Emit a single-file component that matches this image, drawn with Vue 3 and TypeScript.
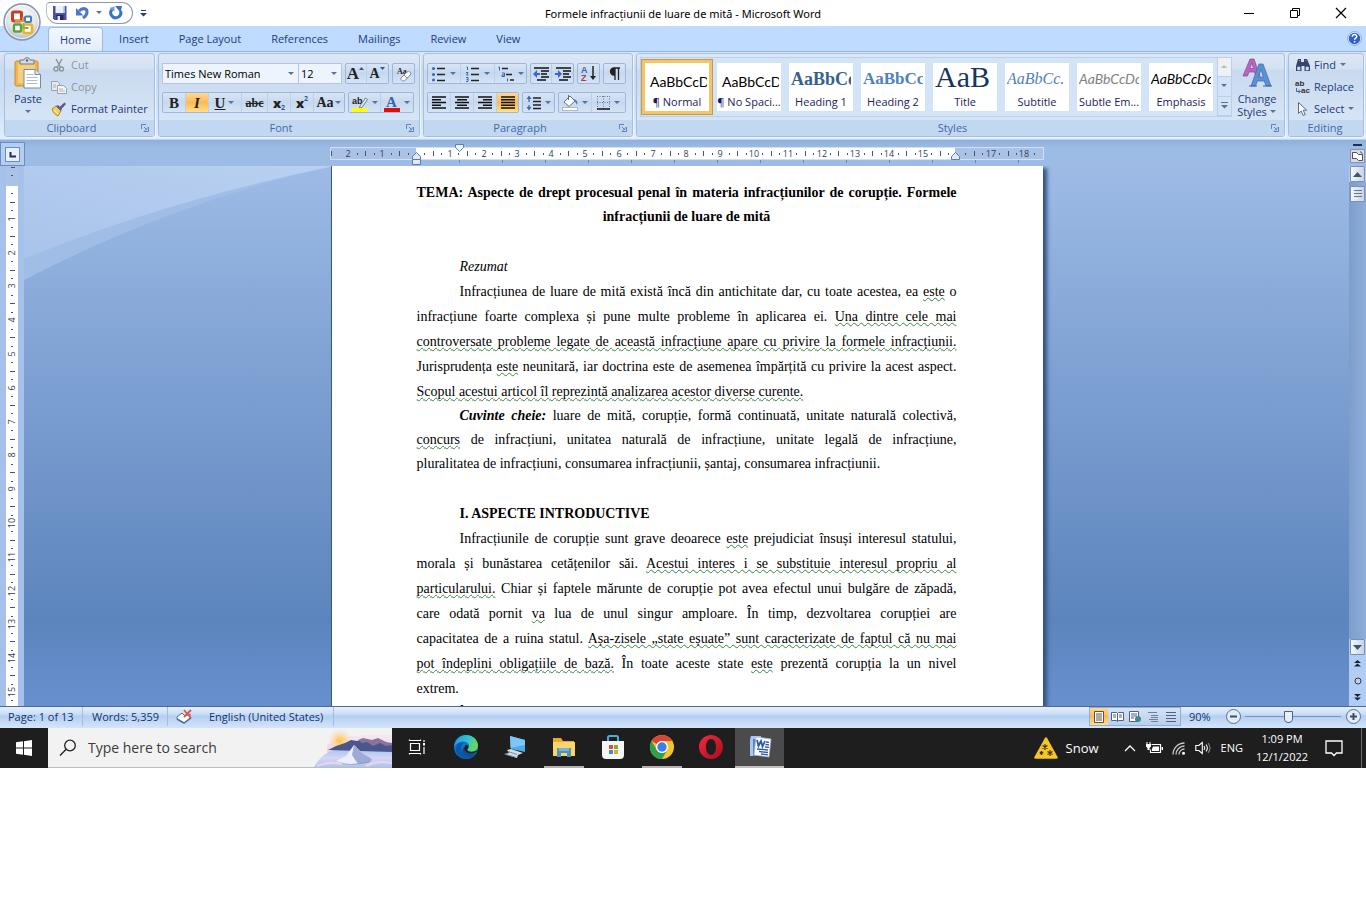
<script setup lang="ts">
import { ref } from 'vue'

interface Seg { t: string; wavy?: boolean; b?: boolean; i?: boolean }
interface Line { segs: Seg[]; indent?: boolean; ragged?: boolean }

const tabs = ['Home', 'Insert', 'Page Layout', 'References', 'Mailings', 'Review', 'View']
const fontName = ref('Times New Roman')
const fontSize = ref('12')
const zoom = ref(90)
const query = ref('')

const styles = [
  { name: '¶ Normal', sample: 'AaBbCcDc', kind: 'body' },
  { name: '¶ No Spaci...', sample: 'AaBbCcDc', kind: 'body' },
  { name: 'Heading 1', sample: 'AaBbCc', kind: 'h1' },
  { name: 'Heading 2', sample: 'AaBbCc', kind: 'h2' },
  { name: 'Title', sample: 'AaB', kind: 'title' },
  { name: 'Subtitle', sample: 'AaBbCc.', kind: 'subtitle' },
  { name: 'Subtle Em...', sample: 'AaBbCcDc', kind: 'subtle' },
  { name: 'Emphasis', sample: 'AaBbCcDc', kind: 'emphasis' },
]

const abstractLines: Line[] = [
  { indent: true, segs: [{ t: 'Infracțiunea de luare de mită există încă din antichitate dar, cu toate acestea, ea ' }, { t: 'este', wavy: true }, { t: ' o' }] },
  { segs: [{ t: 'infracțiune foarte complexa și pune multe probleme în aplicarea ei. ' }, { t: 'Una dintre cele mai', wavy: true }] },
  { segs: [{ t: 'controversate probleme legate de această infracțiune apare cu privire la formele infracțiunii.', wavy: true }] },
  { segs: [{ t: 'Jurisprudența ' }, { t: 'este', wavy: true }, { t: ' neunitară, iar doctrina este de asemenea împărțită cu privire la acest aspect.' }] },
  { ragged: true, segs: [{ t: 'Scopul acestui articol îl reprezintă analizarea acestor diverse curente.', wavy: true }] },
]
const keywordLines: Line[] = [
  { indent: true, segs: [{ t: 'Cuvinte cheie:', b: true, i: true }, { t: ' luare de mită, corupție, formă continuată, unitate naturală colectivă,' }] },
  { segs: [{ t: 'concurs', wavy: true }, { t: ' de infracțiuni, unitatea naturală de infracțiune, unitate legală de infracțiune,' }] },
  { ragged: true, segs: [{ t: 'pluralitatea de infracțiuni, consumarea infracțiunii, șantaj, consumarea infracțiunii.' }] },
]
const introLines: Line[] = [
  { indent: true, segs: [{ t: 'Infracțiunile de corupție sunt grave deoarece ' }, { t: 'este', wavy: true }, { t: ' prejudiciat însuși interesul statului,' }] },
  { segs: [{ t: 'morala și bunăstarea cetățenilor săi. ' }, { t: 'Acestui interes i se substituie interesul propriu al', wavy: true }] },
  { segs: [{ t: 'particularului.', wavy: true }, { t: ' Chiar și faptele mărunte de corupție pot avea efectul unui bulgăre de zăpadă,' }] },
  { segs: [{ t: 'care odată pornit ' }, { t: 'va', wavy: true }, { t: ' lua de unul singur amploare. În timp, dezvoltarea corupției are' }] },
  { segs: [{ t: 'capacitatea de a ruina statul. ' }, { t: 'Așa-zisele „state eșuate” sunt caracterizate de faptul că nu mai', wavy: true }] },
  { segs: [{ t: 'pot îndeplini obligațiile de bază.', wavy: true }, { t: ' În toate aceste state ' }, { t: 'este', wavy: true }, { t: ' prezentă corupția la un nivel' }] },
  { ragged: true, segs: [{ t: 'extrem.' }] },
  { indent: true, ragged: true, segs: [{ t: 'Î' }] },
]
const blocks = [
  { kind: 'abstract', lines: abstractLines },
  { kind: 'keywords', lines: keywordLines },
]

const CM = 33.8
const hZero = 86
const vZero = 19
const range = (a: number, b: number) => Array.from({ length: b - a + 1 }, (_, k) => a + k)
const hUnits = range(-2, 18)
const vUnits = range(0, 15)
const at = (zero: number, n: number) => Math.round(zero + n * CM)
</script>

<template>
  <div class="desktop">
    <header class="titlebar">
      <button class="orb" aria-label="Office Button">
        <svg width="40" height="40" viewBox="0 0 40 40">
          <defs>
            <radialGradient id="orb" cx=".5" cy=".35" r=".7">
              <stop offset="0" stop-color="#fff" /><stop offset=".6" stop-color="#dfe4ec" /><stop offset="1" stop-color="#a3adbd" />
            </radialGradient>
          </defs>
          <circle cx="20" cy="20" r="18" fill="url(#orb)" stroke="#8793a8" stroke-width="1.5" />
          <circle cx="20" cy="20" r="16.5" fill="none" stroke="#fff" opacity=".8" />
          <rect x="10.5" y="10" width="9" height="9" rx="1.5" fill="#fff" stroke="#c9401c" stroke-width="3" />
          <path d="M13 19h8v-4" fill="none" stroke="#f08a3c" stroke-width="2" />
          <rect x="23" y="14.5" width="6" height="5.500" rx="1" fill="#fff" stroke="#3c7fc9" stroke-width="2" />
          <rect x="12" y="22.500" width="7" height="7" rx="1" fill="#fff" stroke="#5aa23c" stroke-width="2.4" />
          <rect x="21.5" y="22.500" width="8.500" height="8.500" rx="1.5" fill="#fff" stroke="#f0b21c" stroke-width="2.6" />
          <path d="M21.500 21v5h5" fill="none" stroke="#8cb43c" stroke-width="1.800" />
        </svg>
      </button>
      <div class="qat">
        <button aria-label="Save">
          <svg width="16" height="16" viewBox="0 0 16 16"><path d="M1 1h13.500v14H2.500L1 13.500z" fill="#4e50a8" /><rect x="3.500" y="1" width="9" height="7" fill="#eaf1fb" /><path d="M11 1h1.500v7H11z" fill="#b9cdea" /><rect x="4.500" y="10" width="7" height="5" fill="#23265e" /><rect x="5.500" y="11" width="2.500" height="4" fill="#dfe4f4" /></svg>
        </button>
        <button aria-label="Undo">
          <svg width="16" height="16" viewBox="0 0 16 16"><path d="M4 6C8 2 12.500 3.500 12 7.500c-.3 2.500-1.800 4-4 5.500" fill="none" stroke="#4a78c6" stroke-width="3" /><path d="M1 3v7.500h7.500z" fill="#4a78c6" /></svg>
        </button>
        <svg class="caret" width="7" height="4" viewBox="0 0 7 4"><path d="M0 0h6L3 3z" fill="#5b7398" /></svg>
        <button aria-label="Repeat">
          <svg width="16" height="16" viewBox="0 0 16 16"><path d="M4 4.500A5 5 0 1 0 12.500 6" fill="none" stroke="#3b70c8" stroke-width="3" /><path d="M7 1h7l-1.500 6.500z" fill="#3b70c8" /><path d="M1.500 3l5-1.500v5z" fill="#6d9be0" /></svg>
        </button>
      </div>
      <button class="qatmore" aria-label="Customize Quick Access Toolbar">
        <svg width="7" height="7" viewBox="0 0 7 7"><path d="M1 0h5v1H1zM0 3h7L3.500 6.500z" fill="#2c3f66" /></svg>
      </button>
      <h1>Formele infracțiunii de luare de mită - Microsoft Word</h1>
      <div class="winbtns">
        <button aria-label="Minimize"><svg width="12" height="12" viewBox="0 0 12 12"><path d="M1 6.500h10" stroke="#000" /></svg></button>
        <button aria-label="Restore"><svg width="12" height="12" viewBox="0 0 12 12"><path d="M1.500 3.500h7v7h-7zM3.500 3.500v-2h7v7h-2" fill="none" stroke="#000" /></svg></button>
        <button aria-label="Close"><svg width="12" height="12" viewBox="0 0 12 12"><path d="M1 1l10 10M11 1L1 11" stroke="#000" stroke-width="1.2" /></svg></button>
      </div>
    </header>

    <nav class="tabs">
      <button v-for="(t, k) in tabs" :key="t" :class="{ on: k === 0 }">{{ t }}</button>
      <button class="help" aria-label="Help">
        <svg width="15" height="15" viewBox="0 0 15 15"><circle cx="7.500" cy="7.500" r="6.500" fill="#2f62c4" stroke="#dce9fb" stroke-width="1.500" /><circle cx="7.500" cy="7.500" r="7" fill="none" stroke="#6f94cf" stroke-width=".7" /><path d="M5.300 5.800c0-3 4.500-2.800 4.500-.3 0 1.500-2.200 1.600-2.200 3.200M7.600 10v1.600" fill="none" stroke="#fff" stroke-width="1.500" /></svg>
      </button>
    </nav>

    <section class="ribbon">
      <div class="group clipboard">
        <div class="body">
          <button class="big paste">
            <svg width="28" height="32" viewBox="0 0 28 32"><rect x="1" y="4" width="23" height="25" rx="1.500" fill="#efb84f" stroke="#c98e2c" /><rect x="4" y="6" width="17" height="20" fill="#f6cf7c" /><path d="M6 3h4c0-3 6-3 6 0h4v4H6z" fill="#d7dbe2" stroke="#71798a" /><circle cx="13" cy="3.500" r="1.200" fill="#596272" /><path d="M10 12.500h11l5.500 5V31H10z" fill="#fff" stroke="#7088b4" /><path d="M21 12.500v5h5.500" fill="#dbe6f6" stroke="#7088b4" /><path d="M12.500 17.500h7m-7 3h11m-11 3h11m-11 3h11" stroke="#a9bedf" /></svg>
            <span>Paste</span>
            <svg class="caret" width="7" height="4" viewBox="0 0 7 4"><path d="M0 0h6L3 3z" fill="#5b7398" /></svg>
          </button>
          <div class="stack">
            <button class="off">
              <svg width="16" height="16" viewBox="0 0 16 16"><path d="M5 2l4.500 8M11 2L6.500 10" stroke="#8e959e" stroke-width="1.500" fill="none" /><circle cx="5" cy="12" r="2" fill="none" stroke="#8e959e" stroke-width="1.400" /><circle cx="10.500" cy="12" r="2" fill="none" stroke="#8e959e" stroke-width="1.400" /></svg>Cut
            </button>
            <button class="off">
              <svg width="16" height="16" viewBox="0 0 16 16"><path d="M.5 2.500h6l2 2v7h-8z" fill="#e8eaee" stroke="#9aa1ab" /><path d="M6.500 6.500h6l3 3v5h-9z" fill="#f4f5f7" stroke="#9aa1ab" /><path d="M8 10h4m-4 2h6M2 6h3M2 8h3" stroke="#a9b0ba" /></svg>Copy
            </button>
            <button>
              <svg width="16" height="16" viewBox="0 0 16 16"><path d="M1 8l4-3 5 5-3 5c-3-1-5-4-6-7z" fill="#f5cf5b" stroke="#b78a24" /><path d="M5 5l2-1 4 4-1 2z" fill="#4c5fae" /><path d="M8.500 6l5-4.500L15 3l-4.500 5z" fill="#6b4d8f" /><path d="M3 9l4 4" stroke="#fff3b8" /></svg>Format Painter
            </button>
          </div>
        </div>
        <footer><span>Clipboard</span><button class="launch" aria-label="Clipboard options"><svg width="8" height="8" viewBox="0 0 8 8"><path d="M.5 5V.5H5M3 3l3 3M7.500 3v4.500H3z" fill="none" stroke="#5f83b7" /></svg></button></footer>
      </div>

      <div class="group font">
        <div class="body rows">
          <div class="row">
            <div class="combos">
              <label class="combo wide"><select v-model="fontName" aria-label="Font"><option>Times New Roman</option><option>Calibri</option></select><svg width="7" height="4" viewBox="0 0 7 4"><path d="M0 0h6L3 3z" fill="#5b7398" /></svg></label>
              <label class="combo narrow"><select v-model="fontSize" aria-label="Font size"><option>12</option><option>14</option></select><svg width="7" height="4" viewBox="0 0 7 4"><path d="M0 0h6L3 3z" fill="#5b7398" /></svg></label>
            </div>
            <div class="cluster">
              <button class="c22 serif bigger" aria-label="Grow Font">A<svg width="6" height="4" viewBox="0 0 6 4"><path d="M0 3h5L2.500 0z" fill="#2c559b" /></svg></button>
              <button class="c22 serif smaller" aria-label="Shrink Font">A<svg width="6" height="4" viewBox="0 0 6 4"><path d="M0 0h5L2.500 3z" fill="#2c559b" /></svg></button>
            </div>
            <div class="cluster">
              <button class="c22" aria-label="Clear Formatting"><svg width="18" height="18" viewBox="0 0 18 18"><text x="2" y="9" class="tiny">Aa</text><path d="M6 13l6-6c2-1 4 0 4 2l-6 6.500c-2 1-5 0-4-2.500z" fill="#fff" stroke="#7d8aa2" /><path d="M9 10l3.500 3.500" stroke="#7d8aa2" /></svg></button>
            </div>
          </div>
          <div class="row">
            <div class="cluster">
              <button class="c23 serif" aria-label="Bold"><b>B</b></button>
              <button class="c23 serif lit" aria-label="Italic"><b><i>I</i></b></button>
              <button class="c35 serif" aria-label="Underline"><b><u>U</u></b><svg class="caret" width="7" height="4" viewBox="0 0 7 4"><path d="M0 0h6L3 3z" fill="#5b7398" /></svg></button>
              <button class="c25 serif strike" aria-label="Strikethrough"><s>abc</s></button>
              <button class="c23 sans" aria-label="Subscript"><b>x</b><sub>2</sub></button>
              <button class="c23 sans" aria-label="Superscript"><b>x</b><sup>2</sup></button>
              <button class="c30 serif case" aria-label="Change Case"><b>Aa</b><svg class="caret" width="7" height="4" viewBox="0 0 7 4"><path d="M0 0h6L3 3z" fill="#5b7398" /></svg></button>
            </div>
            <div class="cluster">
              <button class="c32" aria-label="Text Highlight Color"><svg width="18" height="18" viewBox="0 0 18 18"><text x="1" y="10" class="ab">ab</text><path d="M9 12l5.500-8 2 1.500-5.500 8-2.500.5z" fill="#e4e8f0" stroke="#5b6780" stroke-width=".8" /><rect x="1" y="14" width="15" height="4" fill="#ff0" /></svg><svg class="caret" width="7" height="4" viewBox="0 0 7 4"><path d="M0 0h6L3 3z" fill="#5b7398" /></svg></button>
              <button class="c32" aria-label="Font Color"><svg width="18" height="18" viewBox="0 0 18 18"><text x="3" y="13" class="fontcolor">A</text><rect x="1" y="14" width="16" height="4" fill="#e00d0d" /></svg><svg class="caret" width="7" height="4" viewBox="0 0 7 4"><path d="M0 0h6L3 3z" fill="#5b7398" /></svg></button>
            </div>
          </div>
        </div>
        <footer><span>Font</span><button class="launch" aria-label="Font options"><svg width="8" height="8" viewBox="0 0 8 8"><path d="M.5 5V.5H5M3 3l3 3M7.500 3v4.500H3z" fill="none" stroke="#5f83b7" /></svg></button></footer>
      </div>

      <div class="group paragraph">
        <div class="body rows">
          <div class="row">
            <div class="cluster">
              <button class="c32" aria-label="Bullets"><svg width="16" height="16" viewBox="0 0 16 16"><path d="M6 2.500h8M6 8.500h8M6 14.500h8" stroke="#222" stroke-width="1.300" /><circle cx="2.500" cy="2.500" r="1.500" fill="#3c66ae" /><circle cx="2.500" cy="8.500" r="1.500" fill="#3c66ae" /><circle cx="2.500" cy="14" r="1.500" fill="#3c66ae" /></svg><svg class="caret" width="7" height="4" viewBox="0 0 7 4"><path d="M0 0h6L3 3z" fill="#5b7398" /></svg></button>
              <button class="c35" aria-label="Numbering"><svg width="16" height="16" viewBox="0 0 16 16"><path d="M6 2.500h8M6 8.500h8M6 14.500h8" stroke="#222" stroke-width="1.300" /><path d="M1.500 1h1v3M1 6.500h2L1.500 9h2M1 11.500h2v4H1M1.500 13.500H3" fill="none" stroke="#3c66ae" /></svg><svg class="caret" width="7" height="4" viewBox="0 0 7 4"><path d="M0 0h6L3 3z" fill="#5b7398" /></svg></button>
              <button class="c30" aria-label="Multilevel List"><svg width="18" height="16" viewBox="0 0 18 16"><path d="M5 2.500h6M9 8.500h6M13 14h4" stroke="#222" stroke-width="1.300" /><path d="M1.500 1h1v3.500M5 7h2.500v3.500H5V9h2M10.500 12.500v3" fill="none" stroke="#3c66ae" /></svg><svg class="caret" width="7" height="4" viewBox="0 0 7 4"><path d="M0 0h6L3 3z" fill="#5b7398" /></svg></button>
            </div>
            <div class="cluster">
              <button class="c22" aria-label="Decrease Indent"><svg width="16" height="14" viewBox="0 0 16 14"><path d="M1 1h15M8 4h8M8 7h6M8 10h8M4 13h9" stroke="#111" stroke-width="1.500" /><path d="M0 7l4-4v3h3v2H4v3z" fill="#3c66c4" /></svg></button>
              <button class="c22" aria-label="Increase Indent"><svg width="16" height="14" viewBox="0 0 16 14"><path d="M1 1h15M8 4h8M8 7h6M8 10h8M4 13h9" stroke="#111" stroke-width="1.500" /><path d="M7 7L3 3v3H0v2h3v3z" fill="#3c66c4" /></svg></button>
            </div>
            <div class="cluster">
              <button class="c22" aria-label="Sort"><svg width="18" height="19" viewBox="0 0 18 19"><text x="1" y="9" class="az blue">A</text><text x="1" y="17" class="az red">Z</text><path d="M13 2v12" stroke="#222" stroke-width="1.500" /><path d="M10 12h6l-3 4z" fill="#222" /></svg></button>
            </div>
            <div class="cluster">
              <button class="c22" aria-label="Show/Hide"><svg width="12" height="14" viewBox="0 0 12 14"><path d="M11 1H5a3.500 3.500 0 0 0 0 7h1V1M6 8v5M9.500 1v12" fill="none" stroke="#222" stroke-width="1.300" /><path d="M6 1H5a3.500 3.500 0 0 0 0 7h1z" fill="#222" /></svg></button>
            </div>
          </div>
          <div class="row">
            <div class="cluster">
              <button class="c23" aria-label="Align Left"><svg width="16" height="13" viewBox="0 0 16 13"><path d="M1 1h14M1 3.700h9M1 6.500h14M1 9.300h9M1 12h14" stroke="#111" stroke-width="1.400" /></svg></button>
              <button class="c23" aria-label="Center"><svg width="16" height="13" viewBox="0 0 16 13"><path d="M1 1h14M3 3.700h10M1 6.500h14M3 9.300h10M1 12h14" stroke="#111" stroke-width="1.400" /></svg></button>
              <button class="c23" aria-label="Align Right"><svg width="16" height="13" viewBox="0 0 16 13"><path d="M1 1h14M6 3.700h9M1 6.500h14M6 9.300h9M1 12h14" stroke="#111" stroke-width="1.400" /></svg></button>
              <button class="c22 lit" aria-label="Justify"><svg width="16" height="13" viewBox="0 0 16 13"><path d="M1 1h14M1 3.700h14M1 6.500h14M1 9.300h14M1 12h14" stroke="#111" stroke-width="1.400" /></svg></button>
            </div>
            <div class="cluster">
              <button class="c30" aria-label="Line Spacing"><svg width="16" height="16" viewBox="0 0 16 16"><path d="M7 3h8M7 6.500h8M7 10h8M7 13.500h8" stroke="#222" stroke-width="1.300" /><path d="M3 3v11" stroke="#3c66ae" stroke-width="1.300" stroke-dasharray="4 3" /><path d="M.5 4L3 .5 5.500 4zM.5 12L3 15.500 5.500 12z" fill="#3c66ae" /></svg><svg class="caret" width="7" height="4" viewBox="0 0 7 4"><path d="M0 0h6L3 3z" fill="#5b7398" /></svg></button>
            </div>
            <div class="cluster">
              <button class="c32" aria-label="Shading"><svg width="17" height="17" viewBox="0 0 17 17"><path d="M2 8l6-6 5 5-6 5.500z" fill="#fff" stroke="#5e6f8e" /><path d="M6.500 1v5" stroke="#5e6f8e" /><path d="M12 5c3 1 4 3 3 6-1-2-1-3-3-4z" fill="#4a76c0" /><rect x=".5" y="13.500" width="15" height="3" fill="#fff" stroke="#a9b6cb" /></svg><svg class="caret" width="7" height="4" viewBox="0 0 7 4"><path d="M0 0h6L3 3z" fill="#5b7398" /></svg></button>
              <button class="c32" aria-label="Borders"><svg width="14" height="14" viewBox="0 0 14 14"><path d="M.5 0v13M6.500 0v13M12.500 0v13M0 .5h13M0 6.500h13" stroke="#6a7890" stroke-dasharray="1 1.500" /><path d="M0 13h13" stroke="#111" stroke-width="1.500" /></svg><svg class="caret" width="7" height="4" viewBox="0 0 7 4"><path d="M0 0h6L3 3z" fill="#5b7398" /></svg></button>
            </div>
          </div>
        </div>
        <footer><span>Paragraph</span><button class="launch" aria-label="Paragraph options"><svg width="8" height="8" viewBox="0 0 8 8"><path d="M.5 5V.5H5M3 3l3 3M7.500 3v4.500H3z" fill="none" stroke="#5f83b7" /></svg></button></footer>
      </div>

      <div class="group styles">
        <div class="body">
          <div class="gallery">
            <button v-for="(s, k) in styles" :key="s.name" class="card" :class="{ chosen: k === 0 }">
              <span class="sample" :class="s.kind">{{ s.sample }}</span>
              <span class="name">{{ s.name }}</span>
            </button>
            <div class="scroller">
              <button aria-label="Previous row" class="dim"><svg width="7" height="4" viewBox="0 0 7 4"><path d="M0 3h6L3 0z" fill="#b9b9bd" /></svg></button>
              <button aria-label="Next row"><svg width="7" height="4" viewBox="0 0 7 4"><path d="M0 0h6L3 3z" fill="#5b7398" /></svg></button>
              <button aria-label="More styles"><svg width="7" height="7" viewBox="0 0 7 7"><path d="M0 0h7v1H0zM0 3h7L3.500 6.500z" fill="#5b7398" /></svg></button>
            </div>
          </div>
          <button class="big change">
            <svg width="30" height="30" viewBox="0 0 30 30"><path d="M1 18L8 1h4l6 17h-4l-1.500-4H7l-1.500 4zM8 10.500h3.500L9.700 5z" fill="#b765bd" stroke="#8d469c" stroke-width=".7" /><path d="M9 28L17 6h4l8 22h-5l-1.700-5h-7L13.500 28zM16.500 19h4.800L19 11.500z" fill="#5d8fd3" stroke="#3a67a8" stroke-width=".7" /><path d="M7 28h8M21 28h9" stroke="#3a67a8" /></svg>
            <span>Change</span>
            <span>Styles <svg width="7" height="4" viewBox="0 0 7 4"><path d="M0 0h6L3 3z" fill="#5b7398" /></svg></span>
          </button>
        </div>
        <footer><span>Styles</span><button class="launch" aria-label="Styles options"><svg width="8" height="8" viewBox="0 0 8 8"><path d="M.5 5V.5H5M3 3l3 3M7.500 3v4.500H3z" fill="none" stroke="#5f83b7" /></svg></button></footer>
      </div>

      <div class="group editing">
        <div class="body">
          <div class="stack">
            <button>
              <svg width="16" height="16" viewBox="0 0 16 16"><path d="M3 2h3v3h3V2h3l3 7v5h-5.500V9h-3v5H1V9z" fill="#34466e" /><path d="M2.500 10h2.500v3H2.500zM11 10h2.500v3H11zM4 3.500h1M10.500 3.500h1" fill="#c9d8f1" stroke="#c9d8f1" stroke-width=".6" /></svg>Find<svg class="caret" width="7" height="4" viewBox="0 0 7 4"><path d="M0 0h6L3 3z" fill="#5b7398" /></svg>
            </button>
            <button>
              <svg width="16" height="16" viewBox="0 0 16 16"><text x="0" y="7" class="rep">ab</text><text x="6" y="14" class="rep">ac</text><path d="M1.500 9v3.500H5M3.500 11l2 1.500-2 1.500" fill="none" stroke="#3c66ae" /></svg>Replace
            </button>
            <button>
              <svg width="16" height="16" viewBox="0 0 16 16"><path d="M3.500 1.500v11l2.700-2.500 2 4.500 2-1-2-4.300h3.500z" fill="#fff" stroke="#5b6780" /></svg>Select<svg class="caret" width="7" height="4" viewBox="0 0 7 4"><path d="M0 0h6L3 3z" fill="#5b7398" /></svg>
            </button>
          </div>
        </div>
        <footer><span>Editing</span></footer>
      </div>
    </section>

    <div class="rulerbar">
      <button class="tabstop" aria-label="Left tab"><svg width="15" height="15" viewBox="0 0 15 15"><rect x=".5" y=".5" width="14" height="14" fill="#e6effb" stroke="#6a8cc4" /><path d="M5.500 5v4.500H11" fill="none" stroke="#1d2f52" stroke-width="2" /></svg></button>
      <div class="rulerwrap">
        <svg width="714" height="26" viewBox="0 0 714 26">
          <rect x="0" y="7" width="714" height="13" fill="#c3d7f2" />
          <rect x="0" y="7" width="87" height="13" fill="#a9c2e6" />
          <rect x="624" y="7" width="90" height="13" fill="#a9c2e6" />
          <rect x="86" y="7" width="539" height="13" fill="#fff" />
          <path d="M.5 7.500h713v12H.5z" fill="none" stroke="#cfe0f7" />
          <template v-for="n in hUnits" :key="n">
            <text v-if="n !== 0 && n !== 16" :x="at(hZero, n)" y="17" class="num">{{ Math.abs(n) }}</text>
            <path v-if="n < 18" :d="`M${at(hZero, n + .5)}.5 11v5M${at(hZero, n + .25)}.5 13v2M${at(hZero, n + .75)}.5 13v2`" stroke="#45536b" />
          </template>
          <path d="M704.500 13v2M1.500 11v5" stroke="#45536b" />
          <path v-for="k in range(1, 15)" :key="'t' + k" :d="`M${hZero + k * 43}.5 20v3`" stroke="#6c85ad" />
          <path d="M125.500 4.500h8v3l-4 4-4-4z" fill="#eef4fc" stroke="#5f7dab" />
          <path d="M82.500 19.500v-3l4-4 4 4v3zM82.500 19.500h8v5h-8z" fill="#dfe9f8" stroke="#5f7dab" />
          <path d="M621.500 19.500v-3l4-4 4 4v3z" fill="#dfe9f8" stroke="#5f7dab" />
        </svg>
      </div>
      <div class="rulerend">
        <i class="split"></i>
        <button aria-label="View Ruler"><svg width="15" height="14" viewBox="0 0 15 14"><rect x=".5" y=".5" width="14" height="13" fill="#d5dae6" stroke="#8b93a8" /><path d="M2.500 3.500h4l2 2h4v6h-4l-2-2h-4zM10 2.500l2.500 2" fill="#fff" stroke="#4a4f5e" /></svg></button>
      </div>
    </div>

    <main class="workspace">
      <div class="vruler">
        <svg width="12" height="540" viewBox="0 0 12 540">
          <rect width="12" height="540" fill="#fff" />
          <rect width="12" height="20" fill="#a9c2e6" />
          <template v-for="n in vUnits" :key="n">
            <text v-if="n > 0" :x="-at(vZero, n)" y="9" transform="rotate(-90)" class="num">{{ n }}</text>
            <path :d="`M4 ${at(vZero, n + .5)}.5h5M5 ${at(vZero, n + .25)}.5h2M5 ${at(vZero, n + .75)}.5h2`" stroke="#45536b" />
          </template>
          <path d="M5 1.500h4M5 9.500h2" stroke="#45536b" />
        </svg>
      </div>
      <div class="canvas">
        <svg class="swoosh" width="310" height="120" viewBox="0 0 310 120">
          <defs><linearGradient id="sw" x1="0" y1="1" x2="1" y2="0"><stop offset="0" stop-color="#a9c4e9" /><stop offset="1" stop-color="#b9d0f1" /></linearGradient></defs>
          <path d="M0 0H310Q150 36 0 114z" fill="#a0bde6" />
          <path d="M0 0H310Q140 35 0 93z" fill="url(#sw)" />
        </svg>
        <article class="page">
          <h2>
            <span class="line just">TEMA: Aspecte de drept procesual penal în materia infracțiunilor de corupție. Formele</span>
            <span class="line">infracțiunii de luare de mită</span>
          </h2>
          <p class="indent"><i>Rezumat</i></p>
          <p v-for="b in blocks" :key="b.kind" :class="b.kind">
            <span v-for="(l, k) in b.lines" :key="k" class="line" :class="{ just: !l.ragged, indent: l.indent }"><span v-for="(s, j) in l.segs" :key="j" :class="{ wavy: s.wavy, bold: s.b, ital: s.i }">{{ s.t }}</span></span>
          </p>
          <h3 class="indent">I. ASPECTE INTRODUCTIVE</h3>
          <p>
            <span v-for="(l, k) in introLines" :key="k" class="line" :class="{ just: !l.ragged, indent: l.indent }"><span v-for="(s, j) in l.segs" :key="j" :class="{ wavy: s.wavy }">{{ s.t }}</span></span>
          </p>
        </article>
      </div>
      <div class="vscroll">
        <button class="knob" aria-label="Scroll up"><svg width="9" height="5" viewBox="0 0 9 5"><path d="M0 5h9L4.500 0z" fill="#44546f" /></svg></button>
        <div class="track"><button class="knob thumb" aria-label="Scroll position"><svg width="8" height="10" viewBox="0 0 8 10"><path d="M0 1.500h8M0 4.500h8M0 7.500h8" stroke="#6b7689" /></svg></button></div>
        <button class="knob" aria-label="Scroll down"><svg width="9" height="5" viewBox="0 0 9 5"><path d="M0 0h9L4.500 5z" fill="#44546f" /></svg></button>
        <button class="jump" aria-label="Previous Page"><svg width="7" height="7" viewBox="0 0 7 7"><path d="M0 3h7L3.500 0zM0 6.500h7l-3.500-3z" fill="#16213a" /></svg></button>
        <button class="jump" aria-label="Select Browse Object"><svg width="8" height="8" viewBox="0 0 8 8"><circle cx="4" cy="4" r="3" fill="#c9ced8" stroke="#333b4c" /></svg></button>
        <button class="jump" aria-label="Next Page"><svg width="7" height="7" viewBox="0 0 7 7"><path d="M0 0h7L3.500 3zM0 3.500h7l-3.500 3z" fill="#16213a" /></svg></button>
      </div>
    </main>

    <footer class="status">
      <span class="cell c1">Page: 1 of 13</span>
      <span class="cell c2">Words: 5,359</span>
      <span class="cell c3"><svg width="17" height="15" viewBox="0 0 17 15"><path d="M1 8l5-4 3 3 5-2v4l-6 5-7-4z" fill="#fff" stroke="#4c6fb5" /><path d="M1 10l7 4 7-5" fill="none" stroke="#4c6fb5" stroke-width="1.500" /><path d="M8 1l7 8M15 1L8 8" stroke="#e0583c" stroke-width="1.800" /></svg></span>
      <span class="cell c4">English (United States)</span>
      <span class="spring"></span>
      <div class="views">
        <button class="lit" aria-label="Print Layout"><svg width="12" height="12" viewBox="0 0 12 12"><path d="M1.500.5h9v11h-9z" fill="#fff" stroke="#5c5540" /><path d="M3 3h6M3 5h6M3 7h6M3 9h6" stroke="#5c5540" /></svg></button>
        <button aria-label="Full Screen Reading"><svg width="13" height="12" viewBox="0 0 13 12"><path d="M.5 1.500h5l1 1 1-1h5v8h-5l-1 1-1-1h-5z" fill="#fff" stroke="#4f6185" /><path d="M6.500 2v9M2 4h3M2 6h3M8 4h3M8 6h3" stroke="#4f6185" /></svg></button>
        <button aria-label="Web Layout"><svg width="13" height="12" viewBox="0 0 13 12"><path d="M.5.500h9v10h-9z" fill="#fff" stroke="#4f6185" /><path d="M2 3h6M2 5h6M2 7h3" stroke="#4f6185" /><circle cx="9" cy="8" r="3" fill="#3e8a8c" /></svg></button>
        <button aria-label="Outline"><svg width="12" height="12" viewBox="0 0 12 12"><path d="M1 1.500h9M4 4.500h7M4 6.500h7M2 8.500h9M4 10.500h7" stroke="#6f819f" /></svg></button>
        <button aria-label="Draft"><svg width="12" height="12" viewBox="0 0 12 12"><path d="M1 1.500h10M1 4.500h10M1 7.500h10M1 10.500h10" stroke="#4f6185" /></svg></button>
      </div>
      <button class="pct">{{ zoom }}%</button>
      <button class="round" aria-label="Zoom Out"><svg width="17" height="17" viewBox="0 0 17 17"><circle cx="8.500" cy="8.500" r="7" fill="#e2ebf8" stroke="#5b6e92" /><path d="M5 8.500h7" stroke="#3f4c66" stroke-width="2" /></svg></button>
      <input v-model.number="zoom" type="range" min="10" max="190" aria-label="Zoom" />
      <button class="round" aria-label="Zoom In"><svg width="17" height="17" viewBox="0 0 17 17"><circle cx="8.500" cy="8.500" r="7" fill="#e2ebf8" stroke="#5b6e92" /><path d="M5 8.500h7M8.500 5v7" stroke="#3f4c66" stroke-width="2" /></svg></button>
    </footer>

    <footer class="taskbar">
      <button class="start" aria-label="Start"><svg width="16" height="16" viewBox="0 0 16 16"><path d="M0 2.300L7 1.300V7.600H0zM8 1.200L16 0V7.600H8zM0 8.500H7V14.700L0 13.700zM8 8.500H16V16L8 14.800z" fill="#fff" /></svg></button>
      <label class="search">
        <svg width="18" height="18" viewBox="0 0 18 18"><circle cx="11" cy="6.500" r="5.300" fill="none" stroke="#222" stroke-width="1.300" /><path d="M7.200 10.300L1 16.500" stroke="#222" stroke-width="1.400" /></svg>
        <input v-model="query" type="text" placeholder="Type here to search" aria-label="Search" />
        <svg class="scene" width="78" height="39" viewBox="0 0 78 39">
          <defs>
            <linearGradient id="sea" x1="0" y1="0" x2="0" y2="1"><stop offset="0" stop-color="#a9c4ee" /><stop offset=".5" stop-color="#d5d6f5" /><stop offset="1" stop-color="#a8c6f2" /></linearGradient>
            <linearGradient id="sky" x1="0" y1="0" x2="0" y2="1"><stop offset="0" stop-color="#f2eaf0" /><stop offset="1" stop-color="#f3cfe4" /></linearGradient>
            <radialGradient id="sun"><stop offset="0" stop-color="#ffc54a" /><stop offset=".35" stop-color="#ffd58a" /><stop offset="1" stop-color="#f3e3ec" stop-opacity="0" /></radialGradient>
          </defs>
          <path d="M13 18C20 8 45 6 78 7v18H13z" fill="url(#sky)" />
          <circle cx="26" cy="13" r="13" fill="url(#sun)" />
          <path d="M0 39C8 26 16 21 30 21h48v18z" fill="url(#sea)" />
          <path d="M14 22l8-4 9-3 6-3 6 1 6-2 9 2 6-2 8 4 6 1v8z" fill="#4b568c" />
          <path d="M44 12l4 3 5-1 6 4 7-3 6 3 6-1v-2l-6-1-8-4-6 2-9-2z" fill="#8a739d" />
          <path d="M22 33l10-5 8-11 8 8 10 6-3 4-18 2z" fill="#eceffa" />
          <path d="M40 17l8 8 10 6-3 4-11 1-6-9z" fill="#9fa9d6" />
          <path d="M20 33c10 4 25 4 38-1-4 5-28 7-38 1z" fill="#8d9ad6" />
          <path d="M3 38q12-5 25-2M52 38q12-6 26-3" stroke="#edd2ee" stroke-width="2" fill="none" />
        </svg>
      </label>
      <div class="apps">
        <button aria-label="Task View"><svg width="18" height="18" viewBox="0 0 18 18"><path d="M2.500 5.500h9v7h-9zM1.500 3V1.500M2 2.500h10M12.500 3V1.500M1.500 15v1.500M2 15.500h10M12.500 15v1.500M16 2v2M16 9v7" fill="none" stroke="#fff" stroke-width="1.200" /><path d="M15 5h2v2.500h-2z" fill="#fff" /></svg></button>
        <button aria-label="Edge"><svg width="26" height="26" viewBox="0 0 26 26"><defs><linearGradient id="eg" x1="0" y1="0" x2="1" y2=".4"><stop offset="0" stop-color="#1f8fe0" /><stop offset=".55" stop-color="#2cc3d5" /><stop offset="1" stop-color="#63d95b" /></linearGradient></defs><circle cx="13" cy="13" r="12" fill="#1571c7" /><path d="M1 13C2 5 7 1 13 1c8 0 12 6 12 10.500 0 4-3 6-6.500 6-3 0-5-1.500-3-3.500 2-3-1-6.500-5-6.500C6 7.500 2 10 1 13z" fill="url(#eg)" /><path d="M8 14c0 6 5 10 11 9-8 5-17-1-16-9 1-5 6-7 9-5-3 0-4 3-4 5z" fill="#0c58a8" /><path d="M11 13c0 5 5 8 12 5-1 2-3 4-4 5-6 1-10-3-10-7z" fill="#124d91" /><path d="M13 10.500c3 1 3 3 1.500 4.500-2 2 4 4.500 9 1.500l.5 1c-6 4-13 1-13-3.500z" fill="#1c1e22" /></svg></button>
        <button aria-label="Remote PC"><svg width="26" height="24" viewBox="0 0 26 24"><path d="M8 1l15 4v12L9 14z" fill="#4fa9ec" /><path d="M8 1l15 4v5L8.500 13z" fill="#7cc6f8" /><path d="M5 15l4-1 12 4-5 2-1 3-13-4 5-1z" fill="#d5dde4" /><path d="M6 16.500l9 3M4 19.500l9 2.500" stroke="#7d8a98" /></svg></button>
        <button class="run" aria-label="File Explorer"><svg width="24" height="22" viewBox="0 0 24 22"><path d="M1 2h8l2 3h11v15H1z" fill="#e9a92e" /><path d="M1 6h22v14H1z" fill="#fcd568" /><path d="M5 12h14v9h-4v-4H9v4H5z" fill="#4e93bd" /><path d="M7 12h10v3H7z" fill="#77b5d8" /></svg></button>
        <button aria-label="Microsoft Store"><svg width="24" height="26" viewBox="0 0 24 26"><path d="M7 8V3.500Q7 2 8.500 2h7Q17 2 17 3.500V8" fill="none" stroke="#4badd6" stroke-width="2" /><path d="M1 7h22v14q0 4-4 4H5q-4 0-4-4z" fill="#f4f6f8" /><path d="M8 11h4v4H8z" fill="#d9542f" /><path d="M13 11h4v4h-4z" fill="#7fae3a" /><path d="M8 16h4v4H8z" fill="#3a8fc4" /><path d="M13 16h4v4h-4z" fill="#e3aa2d" /></svg></button>
        <button class="run" aria-label="Chrome"><svg width="26" height="26" viewBox="0 0 26 26"><circle cx="13" cy="13" r="12" fill="#f7c32e" /><path d="M2.600 7A12 12 0 0 1 23.400 7H13a6 6 0 0 0-5.200 3z" fill="#dc4437" /><path d="M2.600 7A12 12 0 0 0 13 25l5.200-9A6 6 0 0 1 7.800 16z" fill="#2da14c" /><circle cx="13" cy="13" r="6" fill="#fff" /><circle cx="13" cy="13" r="4.700" fill="#3d7fea" /></svg></button>
        <button aria-label="Opera"><svg width="26" height="26" viewBox="0 0 26 26"><defs><linearGradient id="op" x1="0" y1="0" x2="1" y2="1"><stop offset="0" stop-color="#f5283f" /><stop offset="1" stop-color="#a80d1e" /></linearGradient></defs><path d="M13 1a12 12 0 1 0 0 24 12 12 0 0 0 0-24zm0 4c3 0 5 3.500 5 8s-2 8-5 8-5-3.500-5-8 2-8 5-8z" fill="url(#op)" fill-rule="evenodd" /></svg></button>
        <button class="active" aria-label="Word"><svg width="26" height="26" viewBox="0 0 26 26"><path d="M4 2h10v20H3V6z" fill="#5a83c4" /><path d="M4 2h10v3H6v17H3V6z" fill="#a9c6ec" /><path d="M9 3l15 2-2 18-15-2z" fill="#fff" stroke="#9cb4d8" stroke-width=".7" /><path d="M10 6l1.500 6L14 7l1.500 5.500L18 7" fill="none" stroke="#2d57a8" stroke-width="1.800" /><path d="M19 8l3 .3M18.500 10.500l3.500.4M18 13l4 .4M10 15l11 1M12 17.500l9 1M14 20l7 .8" stroke="#2d57a8" stroke-width="1.300" /></svg></button>
      </div>
      <span class="spring"></span>
      <button class="weather"><svg width="24" height="22" viewBox="0 0 24 22"><path d="M12 1.500L22.500 20.500h-21z" fill="#f5c624" stroke="#f5c624" stroke-width="2.500" stroke-linejoin="round" /><path d="M11 7v6M8.500 8.500l5 3M13.500 8.500l-5 3M7.500 14v4M5.800 15l3.400 2M9.200 15l-3.400 2M16 13v6M13.500 14.500l5 3M18.500 14.500l-5 3" stroke="#3b2e08" stroke-width="1.100" /></svg>Snow</button>
      <div class="tray">
        <button aria-label="Show hidden icons"><svg width="12" height="8" viewBox="0 0 12 8"><path d="M1 7l5-5 5 5" fill="none" stroke="#fff" stroke-width="1.300" /></svg></button>
        <button aria-label="Battery"><svg width="18" height="12" viewBox="0 0 18 12"><path d="M6.500 2.500h9v8h-10v-3" fill="none" stroke="#fff" stroke-width="1.200" /><path d="M8 4.500h6v4.500H7V7zM16.500 5h1.500v3h-1.500zM1 2h5v2.500L4.500 6v2h-2V6L1 4.500zM1.500 0h1v2h-1zM4.500 0h1v2h-1z" fill="#fff" /></svg></button>
        <button aria-label="Network"><svg width="14" height="13" viewBox="0 0 14 13"><path d="M1 12.500A11.500 11.500 0 0 1 12.500 1M4 12.500A8.500 8.500 0 0 1 12.500 4M7 12.500A5.500 5.500 0 0 1 12.500 7" fill="none" stroke="#c9c9c9" stroke-width="1.300" /><circle cx="11.500" cy="11.300" r="1.500" fill="#fff" /></svg></button>
        <button aria-label="Volume"><svg width="16" height="14" viewBox="0 0 16 14"><path d="M.8 4.500h3L7.300 1.500v11L3.800 9.500h-3z" fill="none" stroke="#fff" stroke-width="1.100" /><path d="M9 5q1.500 2 0 4M11 3.500q2.700 3.500 0 7" fill="none" stroke="#fff" stroke-width="1.100" /><path d="M13 2q4 5 0 10" fill="none" stroke="#888" stroke-width="1.100" /></svg></button>
      </div>
      <button class="lang">ENG</button>
      <button class="clock"><span>1:09 PM</span><span>12/1/2022</span></button>
      <button class="notes" aria-label="Notifications"><svg width="18" height="17" viewBox="0 0 18 17"><path d="M1 1h16v12h-5.500L9 15.500 6.500 13H1z" fill="none" stroke="#fff" stroke-width="1.300" /></svg></button>
      <i class="peek"></i>
    </footer>
  </div>
</template>

<style>
html, body { background: #fff; margin: 0; }
</style>

<style scoped>
.desktop { font: 11px/16px "Open Sans", "Noto Sans", sans-serif; color: #1e3a7b; }
.desktop *, .desktop { box-sizing: border-box; }
button { font: inherit; color: inherit; background: none; border: 0; padding: 0; margin: 0; display: flex; align-items: center; justify-content: center; white-space: nowrap; }
svg { display: block; flex: none; }
.spring { flex: 1; }

.titlebar { position: relative; height: 26px; display: flex; align-items: center; background: #fff; padding-left: 46px; }
.orb { position: absolute; left: 2px; top: 2px; z-index: 2; }
.qat { height: 22px; width: 87px; display: flex; align-items: center; gap: 7px; padding-left: 5px; border: 1px solid #8d97ab; border-left-color: #b9c0cd; border-radius: 4px 11px 11px 12px; }
.qat .caret { margin: 0 -2px; }
.qatmore { width: 20px; height: 20px; }
h1 { flex: 1; margin: 0; padding-right: 13px; font: 400 11px/17px "Noto Sans", sans-serif; text-align: center; color: #000; }
.winbtns { display: flex; margin-right: 2px; }
.winbtns button { width: 46px; height: 24px; }

.tabs { height: 25px; display: flex; padding-left: 48px; gap: 12px; background: #bfdbff; align-items: flex-end; }
.tabs button { height: 24px; padding: 0 9px; }
.tabs .on { padding: 0 11px; margin-right: -5px; background: linear-gradient(#f3f8ff, #e3edfa); border: 1px solid #9bbbe3; border-bottom: 0; border-radius: 4px 4px 0 0; }
.tabs .help { margin-left: auto; padding: 0 4px 2px 0; }

.ribbon { display: flex; gap: 3px; padding: 1px 2px 2px 4px; border-top: 1px solid #8db2e3; border-bottom: 1px solid #b9d4f6; background: linear-gradient(#dbe7f6, #c8dbf1 18%, #cfe0f5 60%, #e0edfd); height: 89px; }
.group { display: flex; flex-direction: column; border: 1px solid #a5bfe0; border-radius: 3px; background: linear-gradient(#dde8f5, #d3e1f2 18%, #c9daef 20%, #dae8f8); overflow: hidden; box-shadow: 1px 1px 0 #edf4fd; }
.group .body { flex: 1; min-height: 0; display: flex; }
.group footer { flex: none; height: 16px; display: flex; align-items: center; background: #c1d8f0; color: #4668a9; padding-right: 2px; }
.group footer span { flex: 1; text-align: center; }
.launch { width: 14px; }
.clipboard { width: 151px; }
.font { width: 262px; }
.paragraph { width: 210px; }
.styles { flex: 1; min-width: 640px; }
.editing { width: 76px; }
.big { flex-direction: column; justify-content: flex-start; line-height: 14px; }
.paste { width: 46px; padding-top: 3px; }
.paste span { margin-top: 3px; }
.paste .caret { margin-top: 4px; }
.stack { display: flex; flex-direction: column; }
.stack button { height: 22px; justify-content: flex-start; gap: 4px; }
.stack .caret { margin-left: 1px; }
.off { color: #8d949e; }
.editing .stack { padding-left: 6px; }
.editing .stack button { gap: 3px; }

.rows { flex-direction: column; padding: 9px 3px 0; gap: 8px; }
.row { display: flex; gap: 3px; }
.cluster { display: flex; height: 21px; border: 1px solid #9db7da; border-radius: 2px; background: linear-gradient(#d8e5f5, #c6d8ef 50%, #d5e4f6); }
.cluster button { border-right: 1px solid #bccfe8; gap: 3px; color: #222; }
.cluster button:last-child { border-right: 0; }
.cluster .lit, .views .lit { background: linear-gradient(#fbd89a, #fdb955 50%, #ffe08a); }
.c22 { width: 21px; } .c23 { width: 23px; } .c25 { width: 26px; } .c30 { width: 30px; } .c32 { width: 32px; } .c35 { width: 33px; }
.paragraph .c32 { width: 33px; } .paragraph .c35 { width: 34px; } .paragraph .c30 { width: 31px; }
.serif { font-family: "Liberation Serif", serif; font-size: 15px; font-weight: 700; }
.sans { font-weight: 700; font-size: 13px; }
.cluster .bigger { font-size: 17px; gap: 0; }
.cluster .smaller { font-size: 14px; gap: 0; }
.bigger svg, .smaller svg { align-self: flex-start; margin-top: 3px; }
.cluster .strike { font-size: 12px; }
.cluster .sans { gap: 0; }
sub, sup { font-size: 7px; line-height: 8px; color: #2c559b; }
sub { align-self: flex-end; } sup { align-self: flex-start; margin-top: 2px; }
.cluster .case { font-size: 14px; gap: 1px; }
.combos { display: flex; }
.combo { display: flex; align-items: center; height: 21px; background: #edf4fd; border: 1px solid #b0c6e5; padding-right: 3px; }
.combo + .combo { margin-left: -1px; }
.combo select { appearance: none; flex: 1; min-width: 0; font: 11px/18px "Open Sans", sans-serif; color: #000; background: none; border: 0; padding: 0 2px; margin: 0; }
.wide { width: 137px; } .narrow { width: 44px; }
.tiny { font: 700 8px "Liberation Serif", serif; fill: #222; }
.ab { font: 700 9px "Liberation Sans", sans-serif; fill: #222; }
.fontcolor { font: 700 15px "Liberation Serif", serif; fill: #3a63ae; }
.az { font: 700 9px "Liberation Sans", sans-serif; }
.blue { fill: #3c66ae; } .red { fill: #b33a3a; }
.rep { font: 700 8px "Liberation Sans", sans-serif; fill: #333; }

.styles .body { padding: 3px 2px 0 3px; }
.gallery { display: flex; align-items: center; flex: 1; height: 60px; border: 1px solid #b9d0ed; background: #d4e4f7; overflow: hidden; }
.card { flex: none; width: 72px; height: 56px; flex-direction: column; justify-content: flex-end; border: 4px solid transparent; background: #fff padding-box; overflow: hidden; }
.card.chosen { border: 4px solid #f3c565; outline: 1px solid #c0985a; outline-offset: -1px; }
.sample { width: 60px; height: 31px; line-height: 31px; overflow: hidden; text-align: left; color: #000; font-family: Lato, sans-serif; font-size: 14px; }
.name { color: #1b1b5c; line-height: 16px; height: 17px; }
.h1 { font: 700 18px/32px "Liberation Serif", serif; color: #36608f; }
.h2 { font: 700 17px/32px "Liberation Serif", serif; color: #4f81bd; }
.title { font: 30px/28px "Liberation Serif", serif; color: #17365d; }
.subtitle { font: italic 16px/32px "Liberation Serif", serif; color: #4f81bd; }
.subtle { font-style: italic; color: #808080; }
.emphasis { font-style: italic; }
.scroller { margin-left: auto; width: 14px; align-self: stretch; display: flex; flex-direction: column; border-left: 1px solid #b9d0ed; }
.scroller button { flex: 1; border-bottom: 1px solid #b9d0ed; }
.scroller .dim { background: #eef0f3; }
.change { width: 50px; padding-top: 1px; line-height: 13px; }
.change svg + span { margin-top: 4px; }
.change span { display: flex; align-items: center; gap: 3px; }

.rulerbar { height: 26px; display: flex; background: linear-gradient(#8fb0dc, #9cbbe5 30%); }
.tabstop { width: 25px; height: 24px; margin-top: 2px; border: 1px solid #6a8cc4; background: #b5cef0; }
.rulerwrap { flex: 1; display: flex; justify-content: center; }
.rulerend { width: 17px; display: flex; flex-direction: column; align-items: center; gap: 3px; padding-top: 4px; }
.split { width: 9px; height: 2px; background: #1d3157; }
.num { font: 9px "Open Sans", sans-serif; fill: #333f55; text-anchor: middle; }

.workspace { display: flex; height: 540px; background: #9cbbe5; }
.vruler { width: 24px; padding-left: 6px; background: #a5c1ea; overflow: hidden; }
.canvas { position: relative; flex: 1; display: flex; justify-content: center; overflow: hidden; background: linear-gradient(#9dbbe5, #7da0d2 40%, #5c85bd 84%, #6890cf); }
.swoosh { position: absolute; left: 0; top: 0; }
.page { position: relative; width: 712px; flex: none; align-self: stretch; background: #fff; padding: 15px 86px 0 85px; border-left: 1px solid #3f5778; box-shadow: 4px 2px 4px #34527f; font: 14px/25px "Liberation Serif", serif; color: #000; overflow: hidden; }
.page p, .page h2, .page h3 { margin: 0; font-size: inherit; }
.page h2 { line-height: 24px; text-align: center; margin-bottom: 25px; }
.page .keywords { line-height: 24px; }
.page h3 { margin-top: 25px; }
.line { display: block; white-space: nowrap; }
.just { text-align: justify; text-align-last: justify; white-space: normal; }
.indent { padding-left: 43px; }
.wavy { text-decoration: underline wavy #3a8246 1px; text-underline-offset: 1px; text-decoration-skip-ink: none; }
.bold { font-weight: 700; } .ital { font-style: italic; }

.vscroll { width: 17px; display: flex; flex-direction: column; align-items: center; background: #b2cdf3; }
.knob { width: 15px; height: 16px; flex: none; border: 1px solid #7d90b0; border-radius: 1px; background: linear-gradient(90deg, #f5f8fc, #c6d3e6); }
.track { flex: 1; width: 17px; padding: 4px 1px; background: linear-gradient(90deg, #7d9dcb, #8eadd9); }
.jump { height: 17px; }

.status { height: 22px; display: flex; align-items: center; border-top: 1px solid #50698f; background: linear-gradient(#e3effe, #cfe0f7 30%, #b4cff2 45%, #d5e5fa); padding: 0 4px 2px 0; }
.cell { height: 19px; display: flex; align-items: center; border-right: 1px solid #a3bde2; color: #15346f; }
.c1 { width: 83px; padding-left: 8px; } .c2 { width: 85px; padding-left: 9px; } .c3 { padding-left: 8px; width: 31px; border: 0; } .c4 { padding-left: 10px; width: 135px; }
.views { display: flex; height: 19px; border: 1px solid #92aed6; background: linear-gradient(#d4e3f6, #b9cfec); margin-right: 8px; }
.views button { width: 18px; }
.pct { color: #15346f; width: 35px; justify-content: flex-start; }
.round { width: 18px; }
input[type="range"] { appearance: none; width: 96px; height: 16px; margin: 0 3px; background: linear-gradient(#7d94ba, #7d94ba) center / 100% 1px no-repeat; }
input[type="range"]::-webkit-slider-thumb { appearance: none; width: 9px; height: 12px; border: 1px solid #4e618a; border-radius: 1px 1px 5px 5px; background: #e6eefa; }

.taskbar { height: 40px; display: flex; background: #1e1e1f; color: #fff; font-size: 13px; }
.start { width: 48px; }
.search { width: 344px; height: 40px; background: #f2f2f2; border-bottom: 1px solid #bdbdbd; display: flex; align-items: center; padding-left: 11px; gap: 11px; }
.search input { flex: 1; min-width: 0; border: 0; padding: 0; background: none; font: 14px/20px "Open Sans", sans-serif; color: #333; }
.search input::placeholder { color: #3c3c3c; opacity: 1; }
.apps { display: flex; }
.apps button { width: 49px; height: 40px; border-bottom: 2px solid transparent; }
.apps .run { background: linear-gradient(#b5b0b0, #b5b0b0) center bottom / 40px 2px no-repeat border-box; }
.apps .active { background: #4b4b4c; border-bottom-color: #c4bfbf; }
.weather { gap: 8px; margin-right: 25px; }
.tray { display: flex; gap: 9px; }
.lang { margin: 0 12px 0 10px; font-size: 11px; }
.clock { flex-direction: column; line-height: 18px; font-size: 11px; width: 54px; }
.notes { width: 52px; padding-right: 3px; }
.peek { width: 5px; border-left: 1px solid #6c6c6c; }
</style>
